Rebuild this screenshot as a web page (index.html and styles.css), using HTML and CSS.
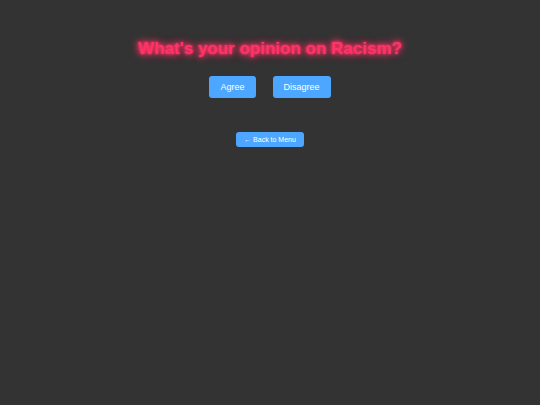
FILE: index.html
```html
<!DOCTYPE html>
<html>
<head>
<meta charset="utf-8">
<link rel="stylesheet" href="styles.css">
</head>
<body>
<div class="page">
  <h1 class="title">What's your opinion on Racism?</h1>
  <div class="choices">
    <button class="btn">Agree</button>
    <button class="btn">Disagree</button>
  </div>
  <button class="btn back">&larr; Back to Menu</button>
</div>
</body>
</html>
```
FILE: styles.css
```css
html, body {
  margin: 0;
  padding: 0;
  background: #333333;
  height: 100%;
}
.page {
  display: flex;
  flex-direction: column;
  align-items: center;
  font-family: "Liberation Sans", Arial, sans-serif;
  padding-top: 38px;
}
.title {
  margin: 0;
  font-size: 17px;
  font-weight: bold;
  color: #ff3366;
  text-shadow: 0 0 3px #ff3366, 0 0 6px #ff3366, 0 0 10px #ff3366;
  line-height: 22px;
}
.choices {
  display: flex;
  gap: 17px;
  margin-top: 16px;
}
.btn {
  background: #4da6ff;
  color: #ffffff;
  border: none;
  border-radius: 3px;
  font-family: "Liberation Sans", Arial, sans-serif;
  font-size: 9px;
  height: 22px;
  padding: 0 11px;
  cursor: pointer;
}
.back {
  margin-top: 34px;
  height: 15px;
  font-size: 7px;
  padding: 0 8px;
}
```
